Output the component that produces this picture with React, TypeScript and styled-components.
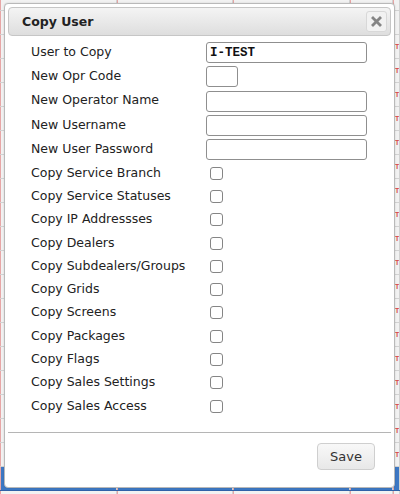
import React from "react";
import styled, { createGlobalStyle } from "styled-components";

const GlobalStyle = createGlobalStyle`
  html, body {
    margin: 0;
    padding: 0;
    background: #e9e9e9;
    font-family: "DejaVu Sans", Verdana, sans-serif;
  }
`;

const Page = styled.div`
  position: relative;
  width: 400px;
  height: 494px;
  overflow: hidden;
  background: #e9e9e9;
`;

/* the data grid underneath the modal */
const Grid = styled.div`
  display: flex;
  flex-direction: column;
  margin-top: -13px;
`;

const GridRow = styled.div<{ $selected?: boolean }>`
  display: grid;
  grid-template-columns: 117px 116px 117px 43px 1fr;
  height: 24px;
  flex: none;
  box-sizing: border-box;
  border-bottom: 1px solid ${(p) => (p.$selected ? "#2f62a8" : "#d2d2d2")};
  background: ${(p) => (p.$selected ? "#3d78c4" : "#f2f2f2")};
`;

const GridCell = styled.div`
  border-left: 1px solid #e7a6a6;
  border-right: 1px solid #d2d2d2;
  display: flex;
  align-items: center;
  padding-left: 1px;
  font-family: "Liberation Sans", Arial, sans-serif;
  font-size: 7px;
  font-weight: bold;
  color: #d84a4a;
  overflow: hidden;
`;

const Overlay = styled.div`
  position: absolute;
  left: 4px;
  top: 3px;
  width: 391px;
  height: 485px;
  box-sizing: border-box;
  background: #fff;
  border: 1px solid #b9b9b9;
  border-radius: 4px;
  box-shadow: 0 0 2px rgba(0, 0, 0, 0.15);
  padding: 3px;
  display: flex;
  flex-direction: column;
`;

const TitleBar = styled.div`
  height: 29px;
  box-sizing: border-box;
  border: 1px solid #c6c6c6;
  border-radius: 4px;
  background: linear-gradient(#f4f4f4, #dedede);
  display: flex;
  align-items: center;
  justify-content: space-between;
  padding: 0 3px 0 13px;
`;

const Title = styled.span`
  font-size: 12.5px;
  font-weight: bold;
  color: #222;
`;

const CloseButton = styled.button`
  width: 21px;
  height: 21px;
  box-sizing: border-box;
  border: 1px solid #d8d8d8;
  border-radius: 3px;
  background: #f2f2f2;
  padding: 0;
  display: flex;
  align-items: center;
  justify-content: center;
  cursor: pointer;
`;

const Body = styled.div`
  flex: 1;
  display: flex;
  flex-direction: column;
  padding: 3px 0 0 23px;
`;

const Row = styled.div<{ $h: number }>`
  display: grid;
  grid-template-columns: 175px 1fr;
  align-items: center;
  height: ${(p) => p.$h}px;
`;

const Label = styled.span`
  font-size: 12.5px;
  color: #222;
  white-space: nowrap;
`;

const TextInput = styled.input<{ $w: number; $bold?: boolean }>`
  width: ${(p) => p.$w}px;
  height: 21px;
  margin-top: 3px;
  box-sizing: border-box;
  border: 1px solid #8f8f8f;
  border-radius: 3px;
  padding: 0 4px 0 3px;
  font-family: "Liberation Mono", "Courier New", monospace;
  font-weight: ${(p) => (p.$bold ? "bold" : "normal")};
  font-size: 12.5px;
  color: #111;
  background: #fff;
  outline: none;
`;

const Check = styled.span`
  display: block;
  width: 13px;
  height: 13px;
  box-sizing: border-box;
  margin-left: 4px;
  margin-top: 2px;
  border: 1px solid #858585;
  border-radius: 3px;
  background: #fff;
`;

const Divider = styled.div`
  height: 1px;
  background: #b5b5b5;
`;

const Footer = styled.div`
  height: 51px;
  display: flex;
  align-items: flex-start;
  justify-content: flex-end;
  padding: 10px 16px 0 0;
  box-sizing: border-box;
`;

const SaveButton = styled.button`
  width: 58px;
  height: 27px;
  border: 1px solid #cfcfcf;
  border-radius: 4px;
  background: linear-gradient(#f8f8f8, #e8e8e8);
  font-family: "DejaVu Sans", Verdana, sans-serif;
  font-size: 13px;
  color: #333;
  cursor: pointer;
`;

const CloseGlyph = () => (
  <svg width="11" height="11" viewBox="0 0 11 11">
    <path d="M2 2 L9 9 M9 2 L2 9" stroke="#858585" strokeWidth="2.8" strokeLinecap="square" />
  </svg>
);

const textFields: { label: string; width: number; value?: string }[] = [
  { label: "User to Copy", width: 161, value: "I-TEST" },
  { label: "New Opr Code", width: 32 },
  { label: "New Operator Name", width: 161 },
  { label: "New Username", width: 161 },
  { label: "New User Password", width: 161 },
];

const copyOptions = [
  "Copy Service Branch",
  "Copy Service Statuses",
  "Copy IP Addressses",
  "Copy Dealers",
  "Copy Subdealers/Groups",
  "Copy Grids",
  "Copy Screens",
  "Copy Packages",
  "Copy Flags",
  "Copy Sales Settings",
  "Copy Sales Access",
];

const gridRows = Array.from({ length: 22 }, (_, i) => i);
const SELECTED_ROW = 20;

export default function App() {
  return (
    <>
      <GlobalStyle />
      <Page>
        <Grid>
          {gridRows.map((i) => {
            const selected = i === SELECTED_ROW;
            const flagged = i > 1 && i < SELECTED_ROW;
            return (
              <GridRow key={i} $selected={selected}>
                <GridCell />
                <GridCell />
                <GridCell />
                <GridCell />
                <GridCell>{flagged ? "T" : ""}</GridCell>
              </GridRow>
            );
          })}
        </Grid>
        <Overlay>
          <TitleBar>
            <Title>Copy User</Title>
            <CloseButton aria-label="close">
              <CloseGlyph />
            </CloseButton>
          </TitleBar>
          <Body>
            {textFields.map((f) => (
              <Row key={f.label} $h={24.3}>
                <Label>{f.label}</Label>
                <TextInput $w={f.width} $bold={!!f.value} defaultValue={f.value ?? ""} />
              </Row>
            ))}
            {copyOptions.map((o) => (
              <Row key={o} $h={23.3}>
                <Label>{o}</Label>
                <Check />
              </Row>
            ))}
          </Body>
          <Divider />
          <Footer>
            <SaveButton>Save</SaveButton>
          </Footer>
        </Overlay>
      </Page>
    </>
  );
}
